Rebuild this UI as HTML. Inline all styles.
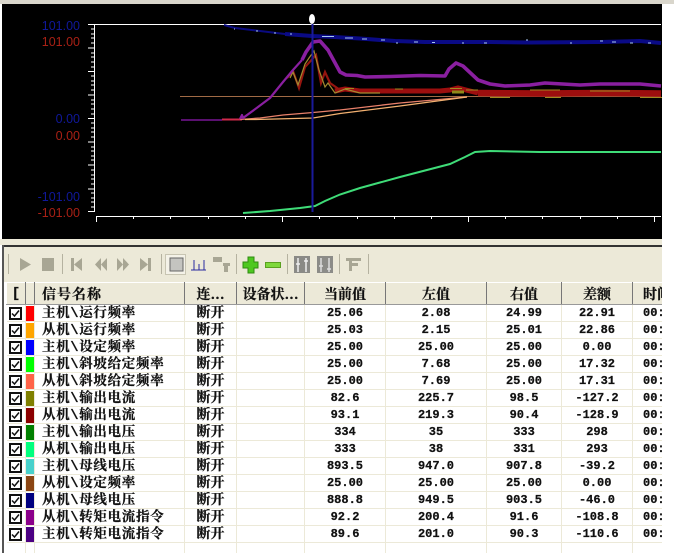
<!DOCTYPE html>
<html><head><meta charset="utf-8">
<style>
html,body{margin:0;padding:0;background:#fff;width:674px;height:556px;overflow:hidden}
#top{position:absolute;left:0;top:0;width:674px;height:4px;background:#d9d6cc}
#chart{position:absolute;left:2px;top:4px;width:660px;height:235px;background:#000}
#strip{position:absolute;left:0;top:239px;width:662px;height:6px;background:#ece9d8}
#panel{position:absolute;left:2px;top:245px;width:660px;height:308px;background:#fff;overflow:hidden;border-left:2px solid #555;box-sizing:border-box}
#tb{position:absolute;left:0;top:0;width:660px;height:37px;background:#ece9d8;border-top:2px solid #333;box-sizing:border-box}
#tbl{position:absolute;left:2px;top:37px;border-collapse:collapse;table-layout:fixed;width:678px;font-family:"Liberation Mono","Noto Serif CJK SC",monospace;font-size:12px;font-weight:700;color:#111;-webkit-text-stroke:.25px #111}
#tbl th{height:22px;padding:0;background:#ece9d8;border-top:1px solid #fff;border-left:1px solid #fff;border-right:1px solid #777;border-bottom:1px solid #999;font-weight:700;font-size:14px;text-align:center;box-sizing:border-box;overflow:hidden;white-space:nowrap;font-family:"Noto Serif CJK SC",serif}
#tbl td{height:17px;padding:1px 0 0;border-right:1px solid #ece9d8;border-bottom:1px solid #ece9d8;text-align:center;box-sizing:border-box;overflow:hidden;white-space:nowrap;line-height:15px}
#tbl td.n{text-align:left;padding:3px 0 0 7px;font-size:13.5px;letter-spacing:.7px;line-height:13px}
#tbl td.s{font-size:14px;padding-top:3px;line-height:13px}
#tbl td.t{text-align:left;padding-left:10px}
#tbl td.i{padding-top:0}
.cb{display:block;width:9px;height:9px;border:2px solid #111;margin:0 auto;background:#fff;position:relative}
.cb svg{position:absolute;left:0;top:0}
.sw{display:block;width:9px;height:15px;margin:0 auto}
</style></head><body>
<div id="top"></div>
<div id="chart"></div>
<svg style="position:absolute;left:0;top:0" width="662" height="240" viewBox="0 0 662 240">
<g font-family="Liberation Sans,sans-serif" font-size="12.5" text-anchor="end">
<text x="80" y="30" fill="#10189a">101.00</text>
<text x="80" y="46" fill="#a82015">101.00</text>
<text x="80" y="123" fill="#10189a">0.00</text>
<text x="80" y="140" fill="#a82015">0.00</text>
<text x="80" y="201" fill="#10189a">-101.00</text>
<text x="80" y="217" fill="#a82015">-101.00</text>
</g>
<g stroke="#fff" fill="none" shape-rendering="crispEdges">
<path d="M94 24.5H661M94.500 24V212M88 24.5h6M88 48h6M88 71.500h6M88 95h6M88 118.500h6M88 142h6M88 165h6M88 189h6M88 211.500h6"/>
<path d="M91 29h3M91 34h3M91 38h3M91 43h3M91 53h3M91 57h3M91 62h3M91 67h3M91 76h3M91 81h3M91 85h3M91 90h3M91 100h3M91 104h3M91 109h3M91 114h3M91 123h3M91 128h3M91 132h3M91 137h3M91 147h3M91 151h3M91 156h3M91 160h3M91 170h3M91 175h3M91 179h3M91 184h3M91 193h3M91 198h3M91 202h3M91 207h3"/>
<path d="M96 216.500H661M96.500 216v6M133.500 216v3M170.500 216v3M208.500 216v3M245.500 216v3M282.500 216v6M319.500 216v3M357.500 216v3M394.500 216v3M431.500 216v3M468.500 216v6M505.500 216v3M542.500 216v3M580.500 216v3M617.500 216v3M654.500 216v6"/>
</g>
<path d="M180 96.500H661" stroke="#a06a45" stroke-width="1" fill="none"/>
<path d="M181 120H222" stroke="#5a1070" stroke-width="2" fill="none"/>
<path d="M222 119.500H242" stroke="#d02a4a" stroke-width="2" fill="none"/>
<g fill="none" stroke-width="1.300">
<path d="M240 119.500L260 118L283 115L313 112.500L340 110L400 103L467 97" stroke="#e8806a"/>
<path d="M245 119.500H256L313 118L340 113.500L400 106L467 97" stroke="#f2b070"/>
</g>
<path d="M224 25L235 28L260 31L285 34" stroke="#0a0a80" stroke-width="2" fill="none"/>
<path d="M285 34L312 36L334 37L360 38.500L395 41L425 42L490 42L530 42.500L600 42L640 41L661 43" stroke="#0a0a85" stroke-width="4" fill="none"/>
<path d="M234 29h1M256 31h2M274 33h2M290 34h2M322 36.500h12M345 38h8M362 39h5M381 40h4M396 43h2M414 42h4M432 42.500h3M462 43h2M484 43h3M526 40h2M570 43h2M600 41h3M612 42h4M630 43h3M648 43h3" stroke="#a8c8f0" stroke-width="1" fill="none"/>
<path d="M335 91L345 89L360 91L395 91L440 91L450 90L458 88L466 90L478 93" stroke="#9c0e0e" stroke-width="5" fill="none"/>
<path d="M478 93L540 93.500L600 93L661 93.500" stroke="#9c0e0e" stroke-width="6.500" fill="none"/>
<path d="M287 78L293 71L299 88L305 67L316 55L321 83L325 72L330 83L340 90" stroke="#96150f" stroke-width="2.200" fill="none"/>
<path d="M290 78L293 72L298 85L305 64L309 58L314 51L319 70L325 87L328 83L335 93L345 89L360 93L380 93" stroke="#a28a30" stroke-width="1.200" fill="none"/>
<path d="M345 88.500h9M395 89h8M466 90h12M530 90h30M590 91h40M490 97.500h20M545 97.500h16M640 97.500h22M450 88.500h12" stroke="#a08a20" stroke-width="1" fill="none"/>
<path d="M452 92h12" stroke="#8f8a1a" stroke-width="3" fill="none"/>
<path d="M240 119L242 115L243 118L258 107L270 98L283 82L293 70L302 60" stroke="#8a1fa0" stroke-width="2.200" fill="none" stroke-linejoin="round"/>
<path d="M302 60L306 52L313 42L320 41L328 50L340 72L346 75L357 75.500L365 77L390 76.500L420 75.500L445 76L449 69L456 63L463 66L478 80L490 84L505 86L530 85L545 83L580 85L600 84L640 84L661 86" stroke="#8a1fa0" stroke-width="3.600" fill="none" stroke-linejoin="round"/>
<path d="M243 213L270 211L300 208L315 206L325 201L340 194.500L360 188L400 177L450 164L465 157L475 152L490 151L540 152L661 152" stroke="#3fdc78" stroke-width="2" fill="none"/>
<path d="M312.500 24V212" stroke="#1a1a9a" stroke-width="2" fill="none"/>
<ellipse cx="312" cy="19" rx="3" ry="5" fill="#fff"/>
</svg>
<div id="strip"></div>
<div id="panel">
<div id="tb"></div>
<table id="tbl">
<colgroup><col style="width:19px"><col style="width:9px"><col style="width:150px"><col style="width:52px"><col style="width:68px"><col style="width:81px"><col style="width:101px"><col style="width:75px"><col style="width:71px"><col style="width:52px"></colgroup>
<tr><th style="font-family:'Liberation Mono',monospace">[</th><th></th><th style="text-align:left;padding-left:7px;letter-spacing:1px">信号名称</th><th>连...</th><th>设备状...</th><th>当前值</th><th>左值</th><th>右值</th><th>差额</th><th style="text-align:left;padding-left:10px">时间</th></tr>
<tr><td class="i"><i class="cb"><svg width="9" height="9"><path d="M1 4.500L3.500 7L8 1.500" stroke="#111" stroke-width="1.500" fill="none"/></svg></i></td><td class="i"><i class="sw" style="background:#ff0000"></i></td><td class="n">主机\运行频率</td><td class="s">断开</td><td></td><td>25.06</td><td>2.08</td><td>24.99</td><td>22.91</td><td class="t">00:</td></tr>
<tr><td class="i"><i class="cb"><svg width="9" height="9"><path d="M1 4.500L3.500 7L8 1.500" stroke="#111" stroke-width="1.500" fill="none"/></svg></i></td><td class="i"><i class="sw" style="background:#ffa500"></i></td><td class="n">从机\运行频率</td><td class="s">断开</td><td></td><td>25.03</td><td>2.15</td><td>25.01</td><td>22.86</td><td class="t">00:</td></tr>
<tr><td class="i"><i class="cb"><svg width="9" height="9"><path d="M1 4.500L3.500 7L8 1.500" stroke="#111" stroke-width="1.500" fill="none"/></svg></i></td><td class="i"><i class="sw" style="background:#0000ff"></i></td><td class="n">主机\设定频率</td><td class="s">断开</td><td></td><td>25.00</td><td>25.00</td><td>25.00</td><td>0.00</td><td class="t">00:</td></tr>
<tr><td class="i"><i class="cb"><svg width="9" height="9"><path d="M1 4.500L3.500 7L8 1.500" stroke="#111" stroke-width="1.500" fill="none"/></svg></i></td><td class="i"><i class="sw" style="background:#00ff00"></i></td><td class="n">主机\斜坡给定频率</td><td class="s">断开</td><td></td><td>25.00</td><td>7.68</td><td>25.00</td><td>17.32</td><td class="t">00:</td></tr>
<tr><td class="i"><i class="cb"><svg width="9" height="9"><path d="M1 4.500L3.500 7L8 1.500" stroke="#111" stroke-width="1.500" fill="none"/></svg></i></td><td class="i"><i class="sw" style="background:#ff6347"></i></td><td class="n">从机\斜坡给定频率</td><td class="s">断开</td><td></td><td>25.00</td><td>7.69</td><td>25.00</td><td>17.31</td><td class="t">00:</td></tr>
<tr><td class="i"><i class="cb"><svg width="9" height="9"><path d="M1 4.500L3.500 7L8 1.500" stroke="#111" stroke-width="1.500" fill="none"/></svg></i></td><td class="i"><i class="sw" style="background:#808000"></i></td><td class="n">主机\输出电流</td><td class="s">断开</td><td></td><td>82.6</td><td>225.7</td><td>98.5</td><td>-127.2</td><td class="t">00:</td></tr>
<tr><td class="i"><i class="cb"><svg width="9" height="9"><path d="M1 4.500L3.500 7L8 1.500" stroke="#111" stroke-width="1.500" fill="none"/></svg></i></td><td class="i"><i class="sw" style="background:#8b0000"></i></td><td class="n">从机\输出电流</td><td class="s">断开</td><td></td><td>93.1</td><td>219.3</td><td>90.4</td><td>-128.9</td><td class="t">00:</td></tr>
<tr><td class="i"><i class="cb"><svg width="9" height="9"><path d="M1 4.500L3.500 7L8 1.500" stroke="#111" stroke-width="1.500" fill="none"/></svg></i></td><td class="i"><i class="sw" style="background:#008000"></i></td><td class="n">主机\输出电压</td><td class="s">断开</td><td></td><td>334</td><td>35</td><td>333</td><td>298</td><td class="t">00:</td></tr>
<tr><td class="i"><i class="cb"><svg width="9" height="9"><path d="M1 4.500L3.500 7L8 1.500" stroke="#111" stroke-width="1.500" fill="none"/></svg></i></td><td class="i"><i class="sw" style="background:#00ff7f"></i></td><td class="n">从机\输出电压</td><td class="s">断开</td><td></td><td>333</td><td>38</td><td>331</td><td>293</td><td class="t">00:</td></tr>
<tr><td class="i"><i class="cb"><svg width="9" height="9"><path d="M1 4.500L3.500 7L8 1.500" stroke="#111" stroke-width="1.500" fill="none"/></svg></i></td><td class="i"><i class="sw" style="background:#48d1cc"></i></td><td class="n">主机\母线电压</td><td class="s">断开</td><td></td><td>893.5</td><td>947.0</td><td>907.8</td><td>-39.2</td><td class="t">00:</td></tr>
<tr><td class="i"><i class="cb"><svg width="9" height="9"><path d="M1 4.500L3.500 7L8 1.500" stroke="#111" stroke-width="1.500" fill="none"/></svg></i></td><td class="i"><i class="sw" style="background:#8b4513"></i></td><td class="n">从机\设定频率</td><td class="s">断开</td><td></td><td>25.00</td><td>25.00</td><td>25.00</td><td>0.00</td><td class="t">00:</td></tr>
<tr><td class="i"><i class="cb"><svg width="9" height="9"><path d="M1 4.500L3.500 7L8 1.500" stroke="#111" stroke-width="1.500" fill="none"/></svg></i></td><td class="i"><i class="sw" style="background:#000080"></i></td><td class="n">从机\母线电压</td><td class="s">断开</td><td></td><td>888.8</td><td>949.5</td><td>903.5</td><td>-46.0</td><td class="t">00:</td></tr>
<tr><td class="i"><i class="cb"><svg width="9" height="9"><path d="M1 4.500L3.500 7L8 1.500" stroke="#111" stroke-width="1.500" fill="none"/></svg></i></td><td class="i"><i class="sw" style="background:#8b008b"></i></td><td class="n">从机\转矩电流指令</td><td class="s">断开</td><td></td><td>92.2</td><td>200.4</td><td>91.6</td><td>-108.8</td><td class="t">00:</td></tr>
<tr><td class="i"><i class="cb"><svg width="9" height="9"><path d="M1 4.500L3.500 7L8 1.500" stroke="#111" stroke-width="1.500" fill="none"/></svg></i></td><td class="i"><i class="sw" style="background:#4b0082"></i></td><td class="n">主机\转矩电流指令</td><td class="s">断开</td><td></td><td>89.6</td><td>201.0</td><td>90.3</td><td>-110.6</td><td class="t">00:</td></tr>
<tr><td></td><td></td><td></td><td></td><td></td><td></td><td></td><td></td><td></td><td></td></tr>
</table>
</div>
<svg style="position:absolute;left:0;top:245px" width="662" height="37" viewBox="0 245 662 37">
<g stroke="#b5b2a0" fill="none" shape-rendering="crispEdges"><path d="M8.500 254V274M62.500 254V274M161.500 254V274M236.500 254V274M287.500 254V274M339.500 254V274M368.500 254V274"/></g>
<g fill="#a8a694">
<path d="M20 258L31 264.500L20 271Z"/>
<rect x="42" y="258" width="12" height="13"/>
<path d="M71 258h3v13h-3ZM74 264.500L82 258V271Z"/>
<path d="M95 264.500L101 258V271ZM101 264.500L107 258V271Z"/>
<path d="M117 258V271L123 264.500ZM123 258V271L129 264.500Z"/>
<path d="M148 258h3v13h-3ZM140 258V271L148 264.500Z"/>
</g>
<rect x="165.500" y="254.500" width="20" height="20" fill="#f4f2e8" stroke="#c8c5b2"/>
<rect x="170" y="258" width="13" height="13" fill="#c4c4c0" stroke="#666"/>
<path d="M191 270H206M194 260V270M199 264V270M204 260V270" stroke="#2a2aa0" fill="none" shape-rendering="crispEdges"/>
<path d="M213 257H222V262H213ZM223 263H230V266H223ZM224 266H228V272H224Z" fill="#a8a694"/>
<path d="M248 257H254V262H258V268H254V273H248V268H243V262H248Z" fill="#4ec820" stroke="#2f8a10"/>
<rect x="265.500" y="262.500" width="15" height="5" fill="#7fd83c" stroke="#5aa020"/>
<rect x="294" y="256" width="16" height="17" fill="#8a8a86"/>
<path d="M298 258V272M306 258V272M296 264h4M304 261h4" stroke="#eee" stroke-width="1.500" fill="none"/>
<rect x="317" y="256" width="16" height="17" fill="#8c8c88"/>
<path d="M321 258V272M329 258V272M319 266h4M327 269h4" stroke="#ddd" stroke-width="1.500" fill="none"/>
<path d="M346 258H361V261H352V263H358V266H352V271H349V261H346Z" fill="#a8a694"/>
</svg>
</body></html>
